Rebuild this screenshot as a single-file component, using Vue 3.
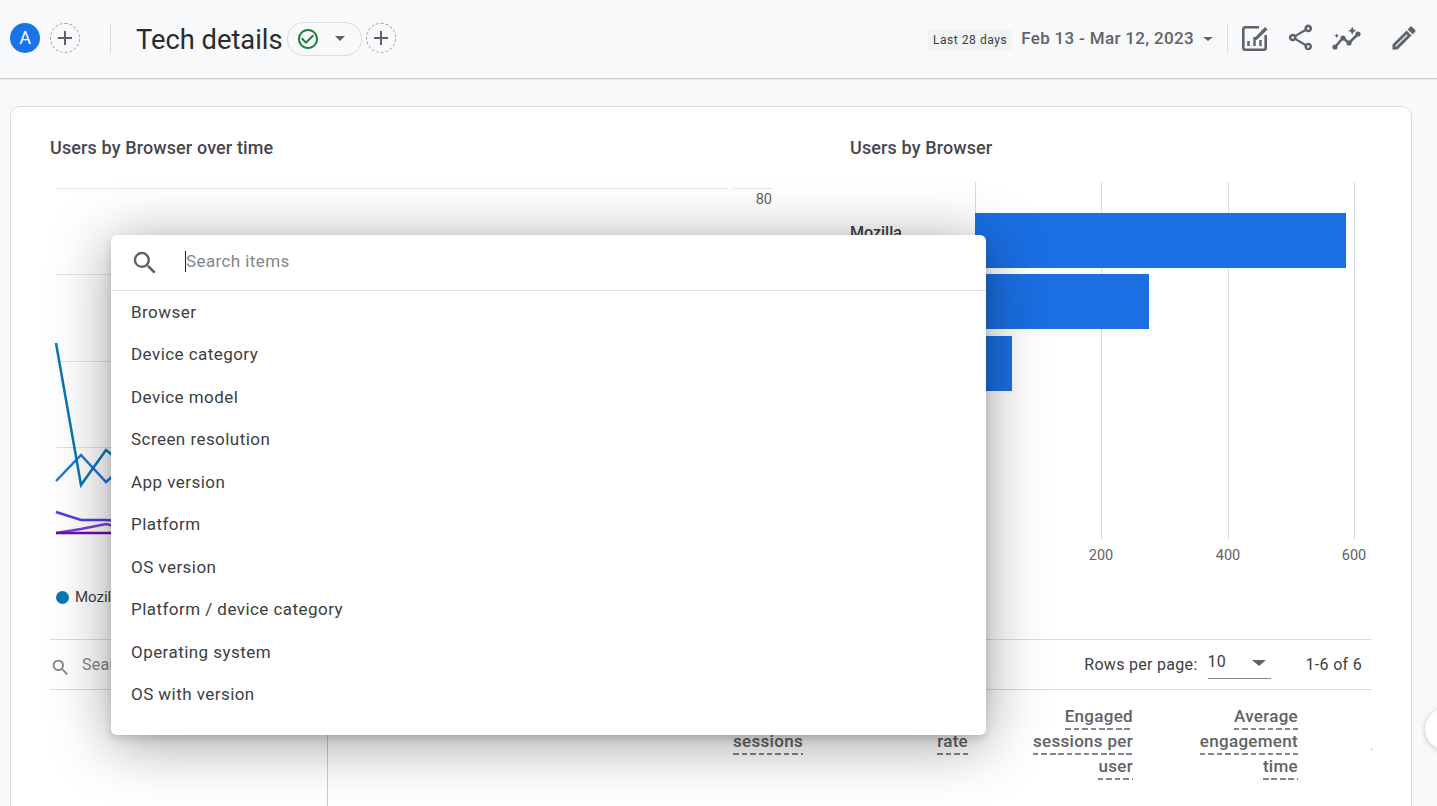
<template>
  <div class="page">
    <header class="topbar">
      <div class="avatar">A</div>
      <button class="add">
        <svg viewBox="0 0 24 24" width="24" height="24"><path d="M19 13h-6v6h-2v-6H5v-2h6V5h2v6h6v2z" /></svg>
      </button>
      <div class="divider first"></div>
      <h1 class="title">Tech details</h1>
      <div class="status">
        <svg class="check" viewBox="0 0 24 24" width="24" height="24"><path d="M16.59 7.58L10 14.17l-3.59-3.58L5 12l5 5 8-8zM12 2C6.48 2 2 6.48 2 12s4.48 10 10 10 10-4.48 10-10S17.52 2 12 2zm0 18c-4.42 0-8-3.58-8-8s3.58-8 8-8 8 3.58 8 8-3.58 8-8 8z" /></svg>
        <span class="caret"></span>
      </div>
      <button class="add second">
        <svg viewBox="0 0 24 24" width="24" height="24"><path d="M19 13h-6v6h-2v-6H5v-2h6V5h2v6h6v2z" /></svg>
      </button>

      <div class="range">
        <span class="chip">Last 28 days</span>
        <span class="dates">Feb 13 - Mar 12, 2023</span>
        <span class="caret small"></span>
      </div>
      <div class="divider"></div>
      <div class="actions">
        <svg viewBox="0 0 28 28" width="28" height="28" fill="none" stroke="#5f6368">
          <path d="M18 3.300H4A1.700 1.700 0 0 0 2.300 5v19A1.700 1.700 0 0 0 4 25.700h19a1.700 1.700 0 0 0 1.700-1.700V11" stroke-width="2.600" />
          <path d="M7.500 22v-5M13.500 22V13M19.500 22v-6" stroke-width="2.400" />
          <path d="M14 13.500l10-10.500 2.500 2.500L16 15.700h-2.200z" fill="#5f6368" stroke="none" />
        </svg>
        <svg viewBox="0 0 24 24" width="31" height="31" fill="#5f6368"><path d="M18 16.080c-.76 0-1.440.3-1.960.77L8.910 12.700c.05-.23.09-.46.09-.7s-.04-.47-.09-.7l7.050-4.110c.54.5 1.250.81 2.040.81 1.660 0 3-1.340 3-3s-1.340-3-3-3-3 1.340-3 3c0 .24.04.47.09.7L8.040 9.810C7.500 9.310 6.790 9 6 9c-1.660 0-3 1.340-3 3s1.340 3 3 3c.79 0 1.500-.31 2.040-.81l7.120 4.160c-.05.21-.08.43-.08.65 0 1.610 1.310 2.920 2.920 2.920 1.610 0 2.920-1.310 2.920-2.920s-1.310-2.920-2.920-2.920zM18 4c.55 0 1 .45 1 1s-.45 1-1 1-1-.45-1-1 .45-1 1-1zM6 13c-.55 0-1-.45-1-1s.45-1 1-1 1 .45 1 1-.45 1-1 1zm12 7.020c-.55 0-1-.45-1-1s.45-1 1-1 1 .45 1 1-.45 1-1 1z" /></svg>
        <svg viewBox="0 0 30 28" width="30" height="28" fill="#5f6368">
          <path d="M3 23l8-9 6 5 9-9" fill="none" stroke="#5f6368" stroke-width="2.600" />
          <circle cx="3" cy="23" r="2.600" /><circle cx="11" cy="14" r="2.600" /><circle cx="17" cy="19" r="2.600" /><circle cx="26" cy="10" r="2.600" />
          <path d="M19 5.500l1.200-3 1.200 3 3 1.200-3 1.200-1.200 3-1.200-3-3-1.200zM4 11l.7-1.800.7 1.800 1.800.7-1.800.7-.7 1.800-.7-1.800-1.800-.7z" />
        </svg>
        <svg class="pencil" viewBox="0 0 24 24" width="30" height="30" fill="#5f6368" stroke="#5f6368" stroke-width="0.4"><path d="M14.060 9.020l.92.92L5.920 19H5v-.92l9.060-9.060M17.660 3c-.25 0-.51.1-.7.29l-1.830 1.830 3.750 3.750 1.830-1.830c.39-.39.39-1.020 0-1.410l-2.340-2.340c-.2-.2-.45-.29-.71-.29zm-3.600 3.190L3 17.250V21h3.750L17.810 9.940l-3.750-3.750z" /></svg>
      </div>
    </header>

    <main class="content">
      <section class="card">
        <div class="charts">
          <div class="chart-left">
            <h2>Users by Browser over time</h2>
            <svg class="plot" viewBox="50 172 800 400" width="800" height="400" fill="none">
              <path v-for="y in gridY" :key="y" :d="`M56 ${y}.5H728M733 ${y}.5H772`" stroke="#e0e2e5" />
              <text x="772" y="204" text-anchor="end" class="axis">80</text>
              <polyline v-for="line in lines" :key="line.color" :points="line.points" :stroke="line.color" stroke-width="2.500" />
            </svg>
            <div class="legend"><i class="dot"></i>Mozilla</div>
          </div>
          <div class="chart-right">
            <h2>Users by Browser</h2>
            <svg class="plot" viewBox="850 172 522 400" width="522" height="400">
              <path v-for="x in gridX" :key="x" :d="`M${x}.5 182V540`" stroke="#dadce0" />
              <rect v-for="bar in bars" :key="bar.y" x="975" :y="bar.y" :width="bar.w" height="55" fill="#1a6fe3" />
              <text x="850" y="238" class="name">Mozilla</text>
              <text x="1101" y="560" text-anchor="middle" class="axis">200</text>
              <text x="1228" y="560" text-anchor="middle" class="axis">400</text>
              <text x="1354" y="560" text-anchor="middle" class="axis">600</text>
            </svg>
          </div>
        </div>

        <div class="toolbar">
          <svg class="toolbar-icon" viewBox="0 0 24 24" width="21" height="21" fill="#80868b"><path d="M15.500 14h-.79l-.28-.27A6.471 6.471 0 0 0 16 9.500 6.500 6.500 0 1 0 9.500 16c1.610 0 3.090-.59 4.230-1.570l.27.28v.79l5 4.990L20.490 19l-4.990-5zm-6 0C7.010 14 5 11.990 5 9.500S7.010 5 9.500 5 14 7.010 14 9.500 11.990 14 9.500 14z" /></svg>
          <span class="table-search">Search...</span>
          <span class="rows-label">Rows per page:</span>
          <div class="rows-select"><span>10</span><i class="caret"></i></div>
          <span class="count">1-6 of 6</span>
        </div>

        <div class="table-head">
          <div class="first-col"></div>
          <div></div>
          <div v-for="col in columns" :key="col.join()" class="col">
            <span v-for="word in col" :key="word">{{ word }}</span>
          </div>
          <div class="clipped"><i></i></div>
        </div>
      </section>
      <div class="float-btn"></div>
    </main>

    <div class="popup">
      <div class="popup-search">
        <svg viewBox="0 0 24 24" width="30" height="30" fill="#5f6368"><path d="M15.500 14h-.79l-.28-.27A6.471 6.471 0 0 0 16 9.500 6.500 6.500 0 1 0 9.500 16c1.610 0 3.090-.59 4.230-1.570l.27.28v.79l5 4.990L20.490 19l-4.990-5zm-6 0C7.010 14 5 11.990 5 9.500S7.010 5 9.500 5 14 7.010 14 9.500 11.990 14 9.500 14z" /></svg>
        <span class="placeholder">Search items</span>
      </div>
      <ul class="items">
        <li v-for="item in items" :key="item">{{ item }}</li>
      </ul>
    </div>
  </div>
</template>

<script setup>
const gridY = [188, 274, 361, 447, 533]
const gridX = [975, 1101, 1228, 1354]

const lines = [
  { color: '#1a73e8', points: '56,481 81,455 106,482 131,460' },
  { color: '#0877b5', points: '56,343 81,485 106,450 131,470' },
  { color: '#4f3fe6', points: '56,512 81,520 106,520 131,522' },
  { color: '#7b3fd0', points: '56,533 81,529 106,524 131,530' },
  { color: '#6a0dad', points: '56,533 131,533' }
]

const bars = [
  { y: 213, w: 371 },
  { y: 274, w: 174 },
  { y: 336, w: 37 }
]

const columns = [
  ['Engaged', 'sessions'],
  ['Engagement', 'rate'],
  ['Engaged', 'sessions per', 'user'],
  ['Average', 'engagement', 'time']
]

const items = [
  'Browser',
  'Device category',
  'Device model',
  'Screen resolution',
  'App version',
  'Platform',
  'OS version',
  'Platform / device category',
  'Operating system',
  'OS with version'
]
</script>

<style>
html, body {
  margin: 0;
  overflow: hidden;
}
</style>

<style scoped>
.page {
  position: relative;
  height: 806px;
  overflow: hidden;
  background: #f8f9fb;
  font-family: Roboto, "Liberation Sans", sans-serif;
  color: #202124;
}

.topbar {
  display: flex;
  align-items: center;
  box-sizing: border-box;
  height: 79px;
  padding: 0 18px 3px 10px;
  border-bottom: 1px solid #c9cbce;
  box-shadow: 0 1px 1px rgba(60, 64, 67, 0.08);
}

.avatar {
  width: 30px;
  height: 30px;
  border-radius: 50%;
  background: #1a73e8;
  color: #fff;
  font-size: 18px;
  line-height: 30px;
  text-align: center;
}

.add {
  display: flex;
  align-items: center;
  justify-content: center;
  width: 30px;
  height: 30px;
  margin-left: 10px;
  padding: 0;
  border: 1px dashed #9aa0a6;
  border-radius: 50%;
  background: none;
}

.add svg {
  fill: #5f6368;
}

.add.second {
  margin-left: 4px;
}

.divider {
  width: 1px;
  height: 30px;
  background: #dadce0;
}

.divider.first {
  margin-left: 30px;
}

.title {
  margin: 4px 4px 0 25px;
  color: #2a2b2e;
  font-size: 27.3px;
  font-weight: 400;
  line-height: 36px;
}

.status {
  display: flex;
  align-items: center;
  box-sizing: border-box;
  width: 75px;
  height: 34px;
  margin-top: 2px;
  padding-left: 8px;
  border: 1px solid #dadce0;
  border-radius: 17px;
}

.check {
  fill: #188038;
}

.caret {
  display: block;
  width: 0;
  height: 0;
  margin-left: 15px;
  border-top: 5px solid #5f6368;
  border-left: 5px solid transparent;
  border-right: 5px solid transparent;
}

.range {
  display: flex;
  align-items: center;
  margin-left: auto;
}

.chip {
  margin-top: 4px;
  padding: 0 5px;
  background: #f1f3f4;
  color: #3c4043;
  font-size: 12px;
  letter-spacing: 0.55px;
  line-height: 20px;
}

.dates {
  margin: 1px 0 0 9px;
  color: #5f6368;
  font-size: 17px;
  font-weight: 500;
  letter-spacing: 0.33px;
}

.caret.small {
  margin: 2px 14px 0 9px;
  border-top-width: 4px;
  border-left-width: 5px;
  border-right-width: 5px;
}

.actions {
  display: flex;
  align-items: center;
  gap: 16px;
  margin-left: 13px;
}

.pencil {
  margin-left: 11px;
}

.content {
  position: relative;
  padding: 27px 25px 0 10px;
}

.card {
  box-sizing: border-box;
  height: 760px;
  padding: 29px 39px 0;
  border: 1px solid #dadce0;
  border-radius: 10px;
  background: #fff;
}

.charts {
  display: flex;
  height: 503px;
}

.chart-left {
  width: 800px;
}

h2 {
  margin: 0;
  color: #45484c;
  font-size: 18px;
  font-weight: 500;
  letter-spacing: 0.12px;
  line-height: 24px;
}

.plot {
  display: block;
  margin-top: 12px;
}

.axis {
  fill: #5f6368;
  font-size: 14.5px;
}

.name {
  fill: #3c4043;
  font-size: 16px;
  font-weight: 500;
}

.legend {
  display: flex;
  align-items: center;
  gap: 6px;
  margin: 14px 0 0 6px;
  color: #3c4043;
  font-size: 15px;
  line-height: 22px;
}

.dot {
  width: 13px;
  height: 13px;
  border-radius: 50%;
  background: #0877b5;
}

.toolbar {
  display: flex;
  align-items: center;
  height: 49px;
  padding: 0 10px 0 0;
  border-top: 1px solid #dadce0;
  border-bottom: 1px solid #dadce0;
  color: #5f6368;
  font-size: 16px;
  letter-spacing: 0.3px;
}

.toolbar-icon {
  margin-top: 5px;
}

.table-search {
  margin-left: 11px;
  color: #80868b;
}

.rows-label {
  margin-left: auto;
  color: #3c4043;
}

.rows-select {
  display: flex;
  align-items: center;
  justify-content: space-between;
  box-sizing: border-box;
  width: 63px;
  height: 29px;
  margin-left: 10px;
  border-bottom: 1px solid #80868b;
  color: #3c4043;
}

.rows-select span {
  margin-bottom: 6px;
}

.rows-select .caret {
  margin: 0 5px 3px 0;
  border-top-width: 6px;
  border-left-width: 7px;
  border-right-width: 7px;
}

.count {
  margin-left: 35px;
  color: #3c4043;
}

.table-head {
  display: grid;
  grid-template-columns: 278px 1fr repeat(4, 165px) 74px;
  height: 130px;
}

.first-col {
  border-right: 1px solid #c9cbce;
}

.col {
  display: flex;
  flex-direction: column;
  align-items: flex-end;
  padding-top: 15px;
  color: #5f6368;
  font-size: 17px;
  font-weight: 500;
  letter-spacing: 0.3px;
}

.col span {
  height: 25px;
  line-height: 23px;
  background: repeating-linear-gradient(to right, #80868b 0 5.5px, transparent 5.5px 8.5px) left 23px / 100% 2px no-repeat;
}

.clipped {
  display: flex;
  justify-content: flex-end;
  padding-top: 59px;
}

.clipped i {
  width: 1px;
  height: 1px;
  background: #80868b;
}

.float-btn {
  position: absolute;
  left: 1425px;
  top: 629px;
  width: 42px;
  height: 42px;
  border-radius: 50%;
  background: #fff;
  box-shadow: 0 1px 5px rgba(60, 64, 67, 0.3);
}

.popup {
  position: absolute;
  left: 111px;
  top: 235px;
  width: 875px;
  height: 500px;
  border-radius: 6px;
  background: #fff;
  box-shadow: 0 8px 60px rgba(0, 0, 0, 0.38), 0 4px 8px rgba(0, 0, 0, 0.14);
}

.popup-search {
  display: flex;
  align-items: center;
  box-sizing: border-box;
  height: 56px;
  padding-left: 19px;
  border-bottom: 1px solid #dadce0;
}

.placeholder {
  margin: -2px 0 0 25px;
  padding: 1px 0;
  border-left: 1px solid #202124;
  color: #80868b;
  font-size: 17px;
  letter-spacing: 0.4px;
  line-height: 19px;
}

.items {
  margin: -0.3px 0 0;
  padding: 0;
  list-style: none;
}

.items li {
  height: 42.5px;
  padding-left: 20px;
  color: #3c4043;
  font-size: 17px;
  letter-spacing: 0.45px;
  line-height: 42.5px;
}
</style>
